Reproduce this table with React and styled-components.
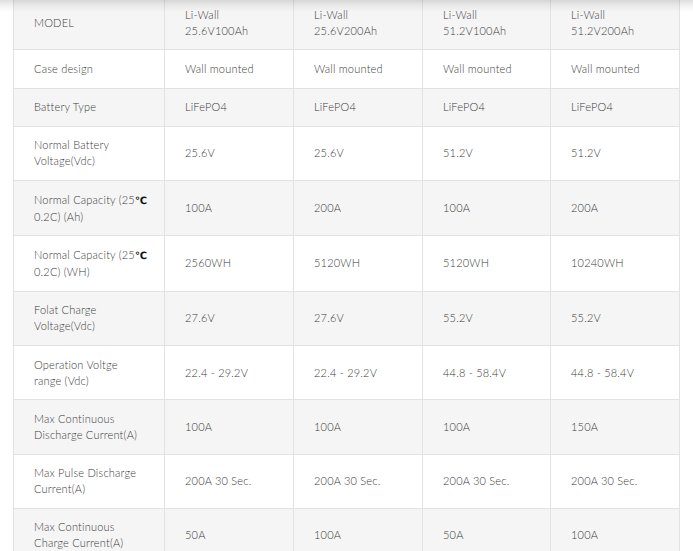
import React from "react"
import styled, {createGlobalStyle} from "styled-components"

const GlobalStyle = createGlobalStyle`
  html, body {
    margin: 0;
    padding: 0;
    background: #ffffff;
    overflow: hidden;
  }
  body {
    font-family: Lato, "Open Sans", Arial, sans-serif;
  }
`

const Page = styled.div`
  position: relative;
  width: 693px;
  height: 551px;
  overflow: hidden;
  background: #fff;
`

const TopShadow = styled.div`
  position: absolute;
  top: 0;
  left: 0;
  right: 0;
  height: 12px;
  background: linear-gradient(
    to bottom,
    rgba(0, 0, 0, 0.13),
    rgba(0, 0, 0, 0.05) 45%,
    rgba(0, 0, 0, 0)
  );
  pointer-events: none;
`

const Wrap = styled.div`
  padding: 0 14px 0 13px;
  margin-top: -5px;
`

const Table = styled.table`
  width: 666px;
  border-collapse: collapse;
  table-layout: fixed;
  font-size: 11px;
  font-weight: 300;
  line-height: 16px;
  color: #3c3c3c;
`

const Row = styled.tr`
  background: ${(p) => (p.$shaded ? "#f5f5f5" : "#ffffff")};
`

const Cell = styled.td`
  border: 1px solid #e2e2e2;
  padding: 10.5px 20px 10.8px;
  vertical-align: middle;
  text-align: left;
  letter-spacing: 0.2px;
  white-space: nowrap;
`

const Degree = styled.span`
  color: #111;
  font-family: "DejaVu Sans", sans-serif;
  font-weight: bold;
  font-size: 10px;
  letter-spacing: -0.5px;
`

const columns = [151, 129, 129, 128, 129]

const rows = [
  {
    label: "MODEL",
    values: [
      ["Li-Wall", "25.6V100Ah"],
      ["Li-Wall", "25.6V200Ah"],
      ["Li-Wall", "51.2V100Ah"],
      ["Li-Wall", "51.2V200Ah"],
    ],
  },
  {label: "Case design", values: ["Wall mounted", "Wall mounted", "Wall mounted", "Wall mounted"]},
  {label: "Battery Type", values: ["LiFePO4", "LiFePO4", "LiFePO4", "LiFePO4"]},
  {label: ["Normal Battery", "Voltage(Vdc)"], values: ["25.6V", "25.6V", "51.2V", "51.2V"]},
  {label: "capAh", values: ["100A", "200A", "100A", "200A"]},
  {label: "capWh", values: ["2560WH", "5120WH", "5120WH", "10240WH"]},
  {label: ["Folat Charge", "Voltage(Vdc)"], values: ["27.6V", "27.6V", "55.2V", "55.2V"]},
  {
    label: ["Operation Voltge", "range (Vdc)"],
    values: ["22.4 - 29.2V", "22.4 - 29.2V", "44.8 - 58.4V", "44.8 - 58.4V"],
  },
  {
    label: ["Max Continuous", "Discharge Current(A)"],
    values: ["100A", "100A", "100A", "150A"],
  },
  {
    label: ["Max Pulse Discharge", "Current(A)"],
    values: ["200A 30 Sec.", "200A 30 Sec.", "200A 30 Sec.", "200A 30 Sec."],
  },
  {
    label: ["Max Continuous", "Charge Current(A)"],
    values: ["50A", "100A", "50A", "100A"],
  },
]

const renderText = (text) => {
  if (text === "capAh" || text === "capWh") {
    return (
      <>
        Normal Capacity (25<Degree>℃</Degree>
        <br />
        0.2C) ({text === "capAh" ? "Ah" : "WH"})
      </>
    )
  }
  if (Array.isArray(text)) {
    return text.map((line, i) => (
      <React.Fragment key={i}>
        {i > 0 && <br />}
        {line}
      </React.Fragment>
    ))
  }
  return text
}

export default function App() {
  return (
    <Page>
      <GlobalStyle />
      <Wrap>
        <Table>
          <colgroup>
            {columns.map((w, i) => (
              <col key={i} style={{width: w}} />
            ))}
          </colgroup>
          <tbody>
            {rows.map((row, i) => (
              <Row key={i} $shaded={i % 2 === 0}>
                <Cell>{renderText(row.label)}</Cell>
                {row.values.map((v, j) => (
                  <Cell key={j}>{renderText(v)}</Cell>
                ))}
              </Row>
            ))}
          </tbody>
        </Table>
      </Wrap>
      <TopShadow />
    </Page>
  )
}
